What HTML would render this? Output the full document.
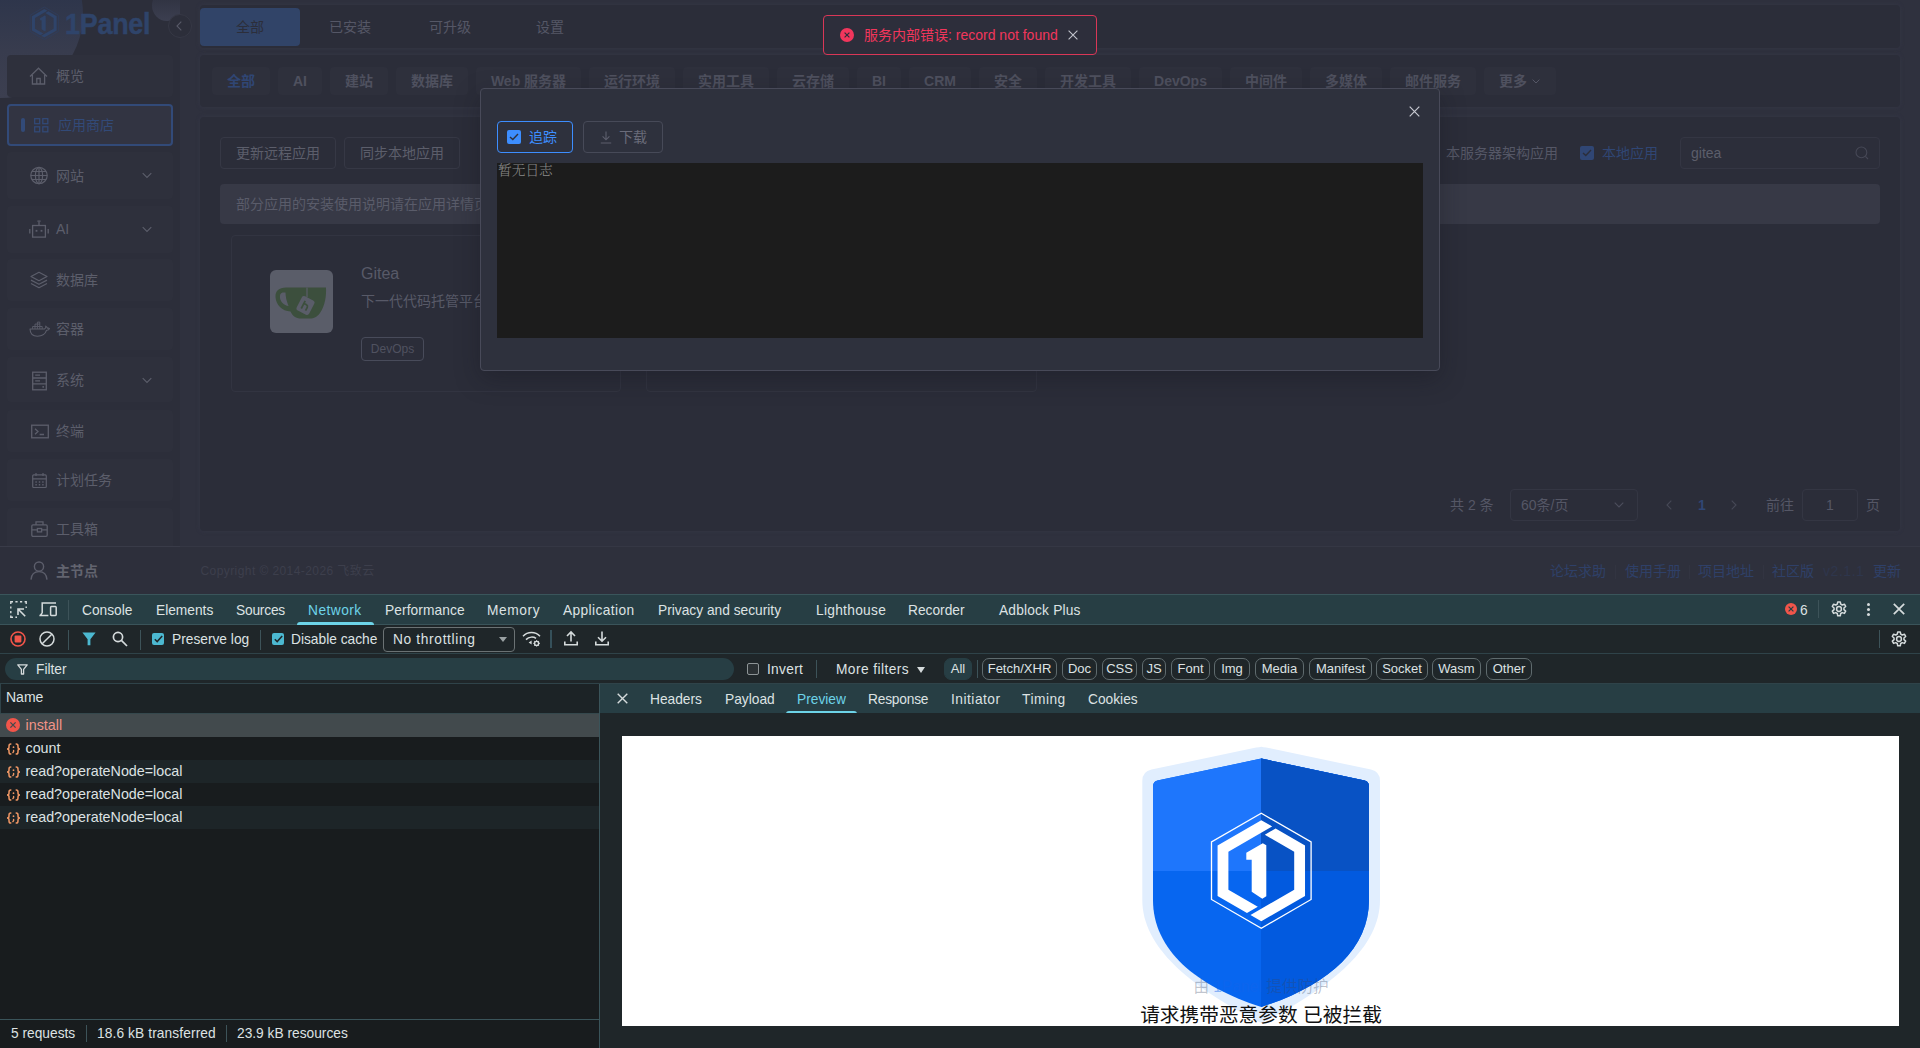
<!DOCTYPE html>
<html lang="zh-CN">
<head>
<meta charset="utf-8">
<title>1Panel</title>
<style>
*{box-sizing:border-box;margin:0;padding:0}
html,body{width:1920px;height:1048px;overflow:hidden;background:#2f313e}
body{position:relative;font-family:"Liberation Sans","Noto Sans CJK SC",sans-serif;font-size:14px;color:#5c5e6b}
.a{position:absolute}
.t{position:absolute;white-space:nowrap;line-height:20px;height:20px}
svg{display:block;overflow:visible}
/* ---------- app (dimmed) ---------- */
#app{position:absolute;left:0;top:0;width:1920px;height:594px;background:#2f313e;overflow:hidden}
#side{position:absolute;left:0;top:0;width:180px;height:594px;background:#2c2e3a;overflow:hidden}
.mi{position:absolute;left:7px;width:166px;background:#2e303c;border-radius:4px}
.mi .t{left:49px;color:#5c5e6b;font-size:14px}
.mi svg{position:absolute;left:22px;transform:translate(1px,.5px)}
.card{position:absolute;background:#2b2d39;border-radius:4px;box-shadow:0 0 4px rgba(60,63,80,.45)}
.cat{position:absolute;top:67px;height:28px;border-radius:4px;background:#2e303c;color:#4f515f;font-weight:bold;font-size:14px;line-height:28px;text-align:center;white-space:nowrap}
.btn{position:absolute;height:32px;border:1px solid #363845;border-radius:4px;line-height:30px;text-align:center;color:#5c5e6b;font-size:14px;white-space:nowrap}
/* ---------- devtools ---------- */
#dt{position:absolute;left:0;top:594px;width:1920px;height:454px;background:#1f2629;font-family:"Liberation Sans","Noto Sans CJK SC",sans-serif;font-size:13.75px;color:#dde2e3}
#dt .t{line-height:18px;height:18px;margin-top:1px}
.chip{position:absolute;top:64px;height:22px;border:1px solid #5f6b6e;border-radius:7px;line-height:20px;text-align:center;font-size:13px;color:#dde2e3;white-space:nowrap}
.sep{position:absolute;width:1px;background:#3d5359}
.row{position:absolute;left:0;width:599px;height:23px}
.row .t{left:25.5px;top:1px;font-size:14.3px}
.jx{position:absolute;left:6px}
</style>
</head>
<body>
<div id="app">
<div id="side">
  <div class="a" style="left:-85px;top:-70px;width:168px;height:168px;border-radius:50%;background:linear-gradient(180deg,#2d354b 38%,#383c4e 72%,#3c3f50 100%)"></div>
  <div class="a" style="left:152px;top:-10px;width:30px;height:31px;border-radius:50%;background:linear-gradient(180deg,#2f3241 20%,#3c3f50 100%)"></div>
  <!-- logo -->
  <svg class="a" style="left:0;top:0" width="90" height="50" viewBox="0 0 90 50">
    <g transform="translate(44.3,23.3) scale(.283)" fill="#2f446a">
      <polygon points="0,-57.5 49.8,-28.75 49.8,28.75 0,57.5 -49.8,28.75 -49.8,-28.75" fill="none" stroke="#2e3d5e" stroke-width="2.6"/>
      <polygon points="0,-50.5 10.83,-44.25 -32.9,-19 -32.9,19 -3.5,35.98 -14.32,42.23 -43.73,25.25 -43.73,-25.25"/>
      <polygon points="0,50.5 -10.83,44.25 32.9,19 32.9,-19 3.5,-35.98 14.32,-42.23 43.73,-25.25 43.73,25.25"/>
      <polygon points="-15,-18 1.5,-27.5 5,-25.5 5,25.5 1,28 -9.6,21 -9.6,-11 -15,-11"/>
    </g>
  </svg>
  <div class="t" style="left:65px;top:6px;height:36px;line-height:36px;font-size:29px;font-weight:bold;color:#2f446a;transform-origin:0 50%;transform:scaleX(.93);letter-spacing:-.3px;-webkit-text-stroke:.5px #2f446a">1Panel</div>

  <div class="mi" style="top:55px;height:42px">
    <svg style="top:12px;transform:none" width="19" height="18" viewBox="0 0 19 18" fill="none" stroke="#5c5e6b" stroke-width="1.3" stroke-linejoin="miter"><path d="M1 9.5 L9.5 1.2 L18 9.5 M3.4 8 V17 H15.6 V8 M7.8 17 V11.5 H11.2 V17"/></svg>
    <div class="t" style="top:11px">概览</div>
  </div>
  <div class="mi" style="top:104px;height:42px;background:#323442;border:2px solid #324a78">
    <div class="a" style="left:12px;top:12px;width:4px;height:14px;border-radius:2px;background:#324a78"></div>
    <svg style="left:25px;top:12px;transform:none" width="14.5" height="14.5" viewBox="0 0 15 15" fill="none" stroke="#324a78" stroke-width="1.3"><rect x=".7" y=".7" width="5.2" height="5.2"/><rect x="9.1" y=".7" width="5.2" height="5.2"/><rect x=".7" y="9.1" width="5.2" height="5.2"/><rect x="9.1" y="9.1" width="5.2" height="5.2"/></svg>
    <div class="t" style="left:49px;top:9px;color:#324a78">应用商店</div>
  </div>
  <div class="mi" style="top:152px;height:47px">
    <svg style="top:14px" width="18" height="18" viewBox="0 0 18 18" fill="none" stroke="#5c5e6b" stroke-width="1.2"><circle cx="9" cy="9" r="8.2"/><ellipse cx="9" cy="9" rx="3.6" ry="8.2"/><path d="M.8 9 H17.2 M2 5 H16 M2 13 H16 M9 .8 V17.2"/></svg>
    <div class="t" style="top:14px">网站</div>
    <svg style="left:134px;top:20px" width="10" height="6" viewBox="0 0 10 6" fill="none" stroke="#5c5e6b" stroke-width="1.1"><path d="M.7 .7 L5 5 L9.3 .7"/></svg>
  </div>
  <div class="mi" style="top:206px;height:47px">
    <svg style="left:21px;top:13px" width="20" height="19" viewBox="0 0 20 19" fill="none" stroke="#5c5e6b" stroke-width="1.3"><rect x="3.6" y="6" width="12.8" height="11.6"/><path d="M10 6 V2.4 M8.4 1.6 H11.6 M.8 9.5 V14 M19.2 9.5 V14"/><rect x="6.6" y="10.4" width="1.8" height="1.8" fill="#5c5e6b" stroke="none"/><rect x="11.6" y="10.4" width="1.8" height="1.8" fill="#5c5e6b" stroke="none"/></svg>
    <div class="t" style="top:13px">AI</div>
    <svg style="left:134px;top:20px" width="10" height="6" viewBox="0 0 10 6" fill="none" stroke="#5c5e6b" stroke-width="1.1"><path d="M.7 .7 L5 5 L9.3 .7"/></svg>
  </div>
  <div class="mi" style="top:259px;height:42px">
    <svg style="top:12px" width="18" height="17" viewBox="0 0 18 17" fill="none" stroke="#5c5e6b" stroke-width="1.2" stroke-linejoin="round"><path d="M9 .8 L17 5 L9 9.2 L1 5 Z M1 8.6 L9 12.8 L17 8.6 M1 12 L9 16.2 L17 12"/></svg>
    <div class="t" style="top:11px">数据库</div>
  </div>
  <div class="mi" style="top:308px;height:42px">
    <svg style="left:21px;top:13px" width="21" height="16" viewBox="0 0 21 16" fill="none" stroke="#5c5e6b" stroke-width="1.1" stroke-linejoin="round"><path d="M1 7.5 H15.5 C16.6 7 17 5.8 16.8 4.6 C17.8 5.2 18.3 6 18.4 6.8 C19.2 6.5 20 6.7 20.4 7.2 C19.8 8.4 18.6 8.8 17.6 8.7 C16.4 12.4 13 14.8 8.4 14.8 C3.8 14.8 1.2 12 1 7.5 Z"/><path d="M3.6 7.4 V5 H6 V7.4 M6 5 H8.4 V7.4 M8.4 5 H10.8 V7.4 M6 5 V2.6 H8.4 V5 M8.4 2.6 H10.8 V5 M10.8 5 H13.2 V7.4 M8.4 2.6 V.6 H10.8 V2.6" stroke-width=".9"/></svg>
    <div class="t" style="top:11px">容器</div>
  </div>
  <div class="mi" style="top:357px;height:45px">
    <svg style="left:24px;top:14px" width="15" height="19" viewBox="0 0 15 19" fill="none" stroke="#5c5e6b" stroke-width="1.3"><rect x=".7" y=".7" width="13.6" height="17.6"/><path d="M.7 6.5 H14.3 M.7 12.4 H14.3 M3.2 3.6 H8 M3.2 9.4 H8"/><rect x="10.4" y="14.6" width="1.6" height="1.6" fill="#5c5e6b" stroke="none"/></svg>
    <div class="t" style="top:13px">系统</div>
    <svg style="left:134px;top:20px" width="10" height="6" viewBox="0 0 10 6" fill="none" stroke="#5c5e6b" stroke-width="1.1"><path d="M.7 .7 L5 5 L9.3 .7"/></svg>
  </div>
  <div class="mi" style="top:410px;height:42px">
    <svg style="left:23px;top:14px" width="18" height="14" viewBox="0 0 18 14" fill="none" stroke="#5c5e6b" stroke-width="1.3"><rect x=".7" y=".7" width="16.6" height="12.6"/><path d="M4 4.2 L7 7 L4 9.8 M8.6 10 H13"/></svg>
    <div class="t" style="top:11px">终端</div>
  </div>
  <div class="mi" style="top:459px;height:42px">
    <svg style="left:24px;top:13px" width="15" height="16" viewBox="0 0 15 16" fill="none" stroke="#5c5e6b" stroke-width="1.2"><rect x=".7" y="2.4" width="13.6" height="12.6" rx="1"/><path d="M.7 6.4 H14.3 M4 .6 V3.6 M11 .6 V3.6"/><path d="M3.4 9.4 h1.4 M6.8 9.4 h1.4 M10.2 9.4 h1.4 M3.4 12.2 h1.4 M6.8 12.2 h1.4 M10.2 12.2 h1.4" stroke-width="1.5"/></svg>
    <div class="t" style="top:11px">计划任务</div>
  </div>
  <div class="mi" style="top:508px;height:42px">
    <svg style="left:23px;top:12px" width="17" height="17" viewBox="0 0 17 17" fill="none" stroke="#5c5e6b" stroke-width="1.3"><rect x=".8" y="4.4" width="15.4" height="11.4" rx="1.2"/><path d="M5 4.4 V1.4 H12 V4.4 M.8 9.4 H6.4 M10.6 9.4 H16.2"/><rect x="6.4" y="8" width="4.2" height="3.4"/></svg>
    <div class="t" style="top:11px">工具箱</div>
  </div>
  <div class="a" style="left:0;top:546px;width:180px;height:48px;background:#2d2f3b;border-top:1px solid #393b48"></div>
  <svg class="a" style="left:30px;top:561px" width="18" height="19" viewBox="0 0 18 19" fill="none" stroke="#5c5e6b" stroke-width="1.4"><circle cx="9" cy="5.6" r="4.6"/><path d="M1 18.6 C1.4 13.4 4.6 10.6 9 10.6 C13.4 10.6 16.6 13.4 17 18.6"/></svg>
  <div class="t" style="left:56px;top:561px;font-weight:bold;color:#62646f">主节点</div>
</div>
<div class="a" style="left:168px;top:14px;width:24px;height:24px;border-radius:50%;background:#2c2e3a;border:1px solid #363845"></div>
<svg class="a" style="left:176px;top:21px" width="6" height="10" viewBox="0 0 6 10" fill="none" stroke="#585a68" stroke-width="1.1"><path d="M5.3 .7 L1 5 L5.3 9.3"/></svg>

<!-- top tab card -->
<div class="card" style="left:200px;top:5px;width:1700px;height:43px"></div>
<div class="a" style="left:200px;top:8px;width:100px;height:38px;border-radius:4px;background:#314468;color:#2c2e3a;text-align:center;line-height:38px;font-size:14px">全部</div>
<div class="t" style="left:300px;top:17px;width:100px;text-align:center;color:#555766">已安装</div>
<div class="t" style="left:400px;top:17px;width:100px;text-align:center;color:#555766">可升级</div>
<div class="t" style="left:500px;top:17px;width:100px;text-align:center;color:#555766">设置</div>
<!-- category card -->
<div class="card" style="left:200px;top:55px;width:1700px;height:52px"></div>
<div class="cat" style="left:212px;width:58px;color:#304674">全部</div>
<div class="cat" style="left:278px;width:44px">AI</div>
<div class="cat" style="left:330px;width:58px">建站</div>
<div class="cat" style="left:396px;width:72px">数据库</div>
<div class="cat" style="left:476px;width:105px">Web 服务器</div>
<div class="cat" style="left:589px;width:86px">运行环境</div>
<div class="cat" style="left:683px;width:86px">实用工具</div>
<div class="cat" style="left:777px;width:72px">云存储</div>
<div class="cat" style="left:857px;width:44px">BI</div>
<div class="cat" style="left:909px;width:62px">CRM</div>
<div class="cat" style="left:979px;width:58px">安全</div>
<div class="cat" style="left:1045px;width:86px">开发工具</div>
<div class="cat" style="left:1139px;width:83px">DevOps</div>
<div class="cat" style="left:1230px;width:72px">中间件</div>
<div class="cat" style="left:1310px;width:72px">多媒体</div>
<div class="cat" style="left:1390px;width:86px">邮件服务</div>
<div class="cat" style="left:1484px;width:72px;text-align:left;padding-left:15px">更多</div>
<svg class="a" style="left:1532px;top:79px" width="8" height="5" viewBox="0 0 8 5" fill="none" stroke="#555766" stroke-width="1"><path d="M.6 .6 L4 4 L7.4 .6"/></svg>
<!-- content card -->
<div class="card" style="left:200px;top:117px;width:1700px;height:414px"></div>
<div class="btn" style="left:220px;top:137px;width:116px">更新远程应用</div>
<div class="btn" style="left:344px;top:137px;width:116px">同步本地应用</div>
<div class="t" style="left:1446px;top:143px;color:#555766">本服务器架构应用</div>
<div class="a" style="left:1580px;top:146px;width:14px;height:14px;border-radius:2px;background:#304674"></div>
<svg class="a" style="left:1582px;top:149px" width="10" height="8" viewBox="0 0 10 8" fill="none" stroke="#2c2e3a" stroke-width="1.4"><path d="M1 4 L3.8 6.6 L9 1"/></svg>
<div class="t" style="left:1602px;top:143px;color:#304674">本地应用</div>
<div class="a" style="left:1680px;top:137px;width:200px;height:32px;border:1px solid #343643;border-radius:4px;background:#2c2e3a"></div>
<div class="t" style="left:1691px;top:143px;color:#5c5e6b">gitea</div>
<svg class="a" style="left:1855px;top:146px" width="14" height="14" viewBox="0 0 14 14" fill="none" stroke="#464856" stroke-width="1.1"><circle cx="6.4" cy="6.4" r="5.4"/><path d="M10.4 10.4 L13 13"/></svg>
<!-- info bar -->
<div class="a" style="left:220px;top:184px;width:1660px;height:40px;border-radius:4px;background:#373946"></div>
<div class="t" style="left:236px;top:194px;color:#5a5c6a">部分应用的安装使用说明请在应用详情页查看，点击应用卡片即可前往。</div>
<!-- app cards -->
<div class="a" style="left:231px;top:234.5px;width:390px;height:157px;border:1px solid #323441;border-radius:4px"></div>
<div class="a" style="left:646px;top:234.5px;width:391px;height:157px;border:1px solid #323441;border-radius:4px"></div>
<div class="a" style="left:270px;top:270px;width:63px;height:63px;border-radius:6px;background:#5a5d69"></div>
<svg class="a" style="left:274px;top:286px" width="55" height="34" viewBox="0 0 55 34">
  <path d="M12 1.5 H52 C52.5 10 51 20 46 27 C43 31 40 32.5 36 32.5 H27 C22 32.5 18.5 30 16.5 25.5 C8 25 2 19 1.5 11 C1.2 5 5 1.5 12 1.5 Z M8.5 6.5 C6.5 7 5.6 9 6 12 C6.6 16 10 19.5 14.5 20 C12.5 15 11.5 10.5 11.5 6.5 Z" fill="#3c4f3d" fill-rule="evenodd"/>
  <path d="M33 1.5 V11" stroke="#5a5d69" stroke-width="1.2" fill="none"/>
  <g transform="translate(31.5,19.5) rotate(27)"><rect x="-7" y="-8" width="14" height="16" rx="2.5" fill="#5a5d69"/><path d="M-2.4 -4 V4.6 M-2.4 -.4 C-1 -1.6 2.4 -1.6 2.4 .8 V4.6" stroke="#3c4f3d" stroke-width="1.7" fill="none"/></g>
</svg>
<div class="t" style="left:361px;top:264px;font-size:16px;color:#585a68">Gitea</div>
<div class="t" style="left:361px;top:291px;color:#585a68">下一代代码托管平台，轻量级自托管 Git 服务</div>
<div class="a" style="left:361px;top:337px;width:63px;height:24px;border:1px solid #484b5a;border-radius:4px;text-align:center;line-height:22px;font-size:12px;color:#505260">DevOps</div>
<!-- pagination -->
<div class="t" style="left:1450px;top:495px;color:#555766">共 2 条</div>
<div class="a" style="left:1510px;top:489px;width:128px;height:32px;border:1px solid #343643;border-radius:4px"></div>
<div class="t" style="left:1521px;top:495px;color:#555766">60条/页</div>
<svg class="a" style="left:1614px;top:502px" width="10" height="6" viewBox="0 0 10 6" fill="none" stroke="#4c4e5c" stroke-width="1.1"><path d="M.7 .7 L5 5 L9.3 .7"/></svg>
<svg class="a" style="left:1666px;top:500px" width="6" height="10" viewBox="0 0 6 10" fill="none" stroke="#464856" stroke-width="1.1"><path d="M5.3 .7 L1 5 L5.3 9.3"/></svg>
<div class="t" style="left:1698px;top:495px;color:#304674;font-weight:bold">1</div>
<svg class="a" style="left:1731px;top:500px" width="6" height="10" viewBox="0 0 6 10" fill="none" stroke="#464856" stroke-width="1.1"><path d="M.7 .7 L5 5 L.7 9.3"/></svg>
<div class="t" style="left:1766px;top:495px;color:#555766">前往</div>
<div class="a" style="left:1802px;top:489px;width:56px;height:32px;border:1px solid #343643;border-radius:4px"></div>
<div class="t" style="left:1802px;top:495px;width:56px;text-align:center;color:#555766">1</div>
<div class="t" style="left:1866px;top:495px;color:#555766">页</div>
<!-- footer -->
<div class="a" style="left:180px;top:546px;width:1740px;height:48px;background:#2e303c;border-top:1px solid #353744"></div>
<div class="t" style="left:200.5px;top:561px;color:#3d3f4c;font-size:12px;letter-spacing:.42px">Copyright © 2014-2026 飞致云</div>
<div class="t" style="left:1550px;top:561px;color:#2f4068">论坛求助</div>
<div class="sep" style="left:1615px;top:565px;height:14px;background:#323441"></div>
<div class="t" style="left:1625px;top:561px;color:#2f4068">使用手册</div>
<div class="sep" style="left:1689px;top:565px;height:14px;background:#323441"></div>
<div class="t" style="left:1698px;top:561px;color:#2f4068">项目地址</div>
<div class="sep" style="left:1763px;top:565px;height:14px;background:#323441"></div>
<div class="t" style="left:1772px;top:561px;color:#2f4068">社区版</div>
<div class="t" style="left:1823px;top:561px;color:#2e364c;letter-spacing:.55px">v2.1.1</div>
<div class="t" style="left:1873px;top:561px;color:#2f4068">更新</div>

<div class="a" style="left:480px;top:88px;width:960px;height:283px;background:#2e313d;border:1px solid #484a59;border-radius:4px;box-shadow:0 8px 24px rgba(20,21,28,.35)"></div>
<svg class="a" style="left:1409px;top:106px" width="11" height="11" viewBox="0 0 11 11" fill="none" stroke="#c8cad2" stroke-width="1.2"><path d="M.7 .7 L10.3 10.3 M10.3 .7 L.7 10.3"/></svg>
<div class="a" style="left:497px;top:121px;width:76px;height:32px;border:1px solid #3d8eff;border-radius:4px"></div>
<div class="a" style="left:507px;top:130px;width:14px;height:14px;border-radius:2px;background:#3d8eff"></div>
<svg class="a" style="left:509px;top:133px" width="10" height="8" viewBox="0 0 10 8" fill="none" stroke="#2e313d" stroke-width="1.4"><path d="M1 4 L3.8 6.6 L9 1"/></svg>
<div class="t" style="left:529px;top:127px;color:#3d8eff">追踪</div>
<div class="a" style="left:583px;top:121px;width:80px;height:32px;border:1px solid #474a58;border-radius:4px"></div>
<svg class="a" style="left:600px;top:131px" width="12" height="13" viewBox="0 0 12 13" fill="none" stroke="#5d5f6d" stroke-width="1.1"><path d="M6 .5 V8.6 M2.6 5.4 L6 8.8 L9.4 5.4 M.8 12 H11.2"/></svg>
<div class="t" style="left:619px;top:127px;color:#6a6c7a">下载</div>
<div class="a" style="left:497px;top:163px;width:926px;height:175px;background:#1c1c1c"></div>
<div class="t" style="left:498px;top:162px;font-family:'Liberation Mono','Noto Serif CJK SC',monospace;font-size:13.7px;font-weight:300;color:#8a8a8a">暂无日志</div>

<div class="a" style="left:823px;top:15px;width:274px;height:40px;border:1px solid #d93757;border-radius:4px;background:#2d2e3b"></div>
<div class="a" style="left:840px;top:28px;width:14px;height:14px;border-radius:50%;background:#f1365c"></div>
<svg class="a" style="left:844px;top:32px" width="6" height="6" viewBox="0 0 6 6" fill="none" stroke="#2d2e3b" stroke-width="1.2"><path d="M.6 .6 L5.4 5.4 M5.4 .6 L.6 5.4"/></svg>
<div class="t" style="left:864px;top:25px;color:#f1365c">服务内部错误: record not found</div>
<svg class="a" style="left:1068px;top:30px" width="10" height="10" viewBox="0 0 10 10" fill="none" stroke="#c2c4cc" stroke-width="1.1"><path d="M.6 .6 L9.4 9.4 M9.4 .6 L.6 9.4"/></svg>

</div>
<div id="dt">
<!-- tab bar -->
<div class="a" style="left:0;top:0;width:1920px;height:31px;background:#273e44;border-top:1px solid #3a555b;border-bottom:1px solid #3a545a"></div>
<svg class="a" style="left:10px;top:7px" width="17" height="17" viewBox="0 0 17 17" fill="none" stroke="#d5dbdc" stroke-width="1.5"><path d="M.8 3 V.8 H3 M5.4 .8 H7.6 M10 .8 H12.2 M14.6 .8 H16.2 V3 M16.2 5.4 V7 M.8 5.4 V7.6 M.8 10 V12.2 M.8 14.6 V16.2 H3 M5.4 16.2 H7" stroke-width="1.4"/><path d="M8 8 L15.2 15.2 M8 14 V8 H14" stroke-width="1.6"/></svg>
<svg class="a" style="left:39px;top:8px" width="19" height="15" viewBox="0 0 19 15" fill="none" stroke="#d5dbdc" stroke-width="1.5"><path d="M3.2 11 V1 H17 M.4 13.4 H9.4 M3.2 11 L1.2 13.4"/><rect x="11.6" y="4.6" width="5.6" height="8.8" rx=".8"/></svg>
<div class="sep" style="left:68px;top:6px;height:20px"></div>
<div class="t" style="left:82px;top:7px">Console</div>
<div class="t" style="left:156px;top:7px">Elements</div>
<div class="t" style="left:236px;top:7px;letter-spacing:-.2px">Sources</div>
<div class="t" style="left:308px;top:7px;color:#6dd3e8;letter-spacing:.47px">Network</div>
<div class="a" style="left:297px;top:27.5px;width:77px;height:3px;background:#6dd3e8;border-radius:3px 3px 0 0"></div>
<div class="t" style="left:385px;top:7px;letter-spacing:.1px">Performance</div>
<div class="t" style="left:487px;top:7px;letter-spacing:.6px">Memory</div>
<div class="t" style="left:563px;top:7px;letter-spacing:.38px">Application</div>
<div class="t" style="left:658px;top:7px">Privacy and security</div>
<div class="t" style="left:816px;top:7px;letter-spacing:.28px">Lighthouse</div>
<div class="t" style="left:908px;top:7px">Recorder</div>
<div class="t" style="left:999px;top:7px;letter-spacing:.18px">Adblock Plus</div>
<div class="a" style="left:1785px;top:9px;width:12px;height:12px;border-radius:50%;background:#f1554a"></div>
<svg class="a" style="left:1788px;top:12px" width="6" height="6" viewBox="0 0 6 6" fill="none" stroke="#273e44" stroke-width="1.2"><path d="M.6 .6 L5.4 5.4 M5.4 .6 L.6 5.4"/></svg>
<div class="t" style="left:1800px;top:7px">6</div>
<div class="sep" style="left:1818px;top:6px;height:18px"></div>
<svg class="a gear" style="left:1830px;top:6px" width="18" height="18" viewBox="0 0 24 24" fill="none" stroke="#d5dbdc" stroke-width="2"><path d="M10.3 2.5 h3.4 l.6 3 l2 1.15 l2.9 -1 l1.7 2.95 l-2.3 2 v2.3 l2.3 2 l-1.7 2.95 l-2.9 -1 l-2 1.15 l-.6 3 h-3.4 l-.6 -3 l-2 -1.15 l-2.9 1 l-1.7 -2.95 l2.3 -2 v-2.3 l-2.3 -2 l1.7 -2.95 l2.9 1 l2 -1.15 z" stroke-linejoin="round"/><circle cx="12" cy="12" r="3.2"/></svg>
<div class="a" style="left:1867px;top:8.5px;width:3px;height:3px;border-radius:50%;background:#d5dbdc;box-shadow:0 5px 0 #d5dbdc,0 10px 0 #d5dbdc"></div>
<svg class="a" style="left:1893px;top:9px" width="12" height="12" viewBox="0 0 12 12" fill="none" stroke="#d5dbdc" stroke-width="1.7"><path d="M.8 .8 L11.2 11.2 M11.2 .8 L.8 11.2"/></svg>

<!-- toolbar -->
<div class="a" style="left:0;top:31px;width:1920px;height:29px;background:#1f2629;border-bottom:1px solid #2f4349"></div>
<svg class="a" style="left:10px;top:37px" width="16" height="16" viewBox="0 0 16 16"><circle cx="8" cy="8" r="7" fill="none" stroke="#f1554a" stroke-width="1.6"/><rect x="4.6" y="4.6" width="6.8" height="6.8" rx=".8" fill="#f1554a"/></svg>
<svg class="a" style="left:39px;top:37px" width="16" height="16" viewBox="0 0 16 16" fill="none" stroke="#d5dbdc" stroke-width="1.5"><circle cx="8" cy="8" r="7"/><path d="M3.2 12.8 L12.8 3.2"/></svg>
<div class="sep" style="left:68px;top:36px;height:20px"></div>
<svg class="a" style="left:82px;top:38px" width="14" height="14" viewBox="0 0 14 14"><path d="M.4 .6 H13.6 L8.4 7.2 V13.2 H5.6 V7.2 Z" fill="#4cb8d0"/></svg>
<svg class="a" style="left:112px;top:37px" width="16" height="16" viewBox="0 0 16 16" fill="none" stroke="#d5dbdc" stroke-width="1.7"><circle cx="6" cy="6" r="4.6"/><path d="M9.4 9.4 L15 15"/></svg>
<div class="sep" style="left:140px;top:36px;height:20px"></div>
<div class="a" style="left:152px;top:39px;width:12px;height:12px;border-radius:2px;background:#4cb8d0"></div>
<svg class="a" style="left:154px;top:41px" width="9" height="8" viewBox="0 0 9 8" fill="none" stroke="#1f2629" stroke-width="1.5"><path d="M.8 4.2 L3.2 6.6 L8.2 1"/></svg>
<div class="t" style="left:172px;top:36px">Preserve log</div>
<div class="sep" style="left:260px;top:36px;height:20px"></div>
<div class="a" style="left:272px;top:39px;width:12px;height:12px;border-radius:2px;background:#4cb8d0"></div>
<svg class="a" style="left:274px;top:41px" width="9" height="8" viewBox="0 0 9 8" fill="none" stroke="#1f2629" stroke-width="1.5"><path d="M.8 4.2 L3.2 6.6 L8.2 1"/></svg>
<div class="t" style="left:291px;top:36px">Disable cache</div>
<div class="a" style="left:383px;top:33px;width:132px;height:25px;border:1px solid #6b7274;border-radius:4px"></div>
<div class="t" style="left:393px;top:36px;letter-spacing:.65px">No throttling</div>
<div class="a" style="left:499px;top:43px;width:0;height:0;border-left:4px solid transparent;border-right:4px solid transparent;border-top:5px solid #9aa1a3"></div>
<svg class="a" style="left:522px;top:36px" width="20" height="18" viewBox="0 0 20 18" fill="none" stroke="#d5dbdc" stroke-width="1.5"><path d="M1 6.2 C5.6 1.4 13.4 1.4 18 6.2 M4 9.6 C7 6.6 11.4 6.4 14 8.4"/><path d="M6.6 12.6 L9.6 10.4 V14.6 Z" fill="#d5dbdc" stroke="none"/><circle cx="14.6" cy="13.4" r="2" stroke-width="1.4"/><path d="M14.6 10.2 V11 M14.6 15.8 V16.6 M11.4 13.4 H12.2 M17 13.4 H17.8 M12.4 11.2 L13 11.8 M16.2 15 L16.8 15.6 M12.4 15.6 L13 15 M16.2 11.8 L16.8 11.2" stroke-width="1.2"/></svg>
<div class="sep" style="left:550px;top:36px;height:18px;width:2px;background:#35505a"></div>
<svg class="a" style="left:564px;top:37px" width="14" height="15" viewBox="0 0 14 15" fill="none" stroke="#d5dbdc" stroke-width="1.6"><path d="M7 10.6 V1.2 M3 5 L7 1 L11 5 M.8 10.6 V13.8 H13.2 V10.6"/></svg>
<svg class="a" style="left:595px;top:37px" width="14" height="15" viewBox="0 0 14 15" fill="none" stroke="#d5dbdc" stroke-width="1.6"><path d="M7 .6 V10 M3 6.2 L7 10.2 L11 6.2 M.8 10.6 V13.8 H13.2 V10.6"/></svg>
<div class="sep" style="left:1879px;top:36px;height:18px"></div>
<svg class="a gear" style="left:1890px;top:36px" width="18" height="18" viewBox="0 0 24 24" fill="none" stroke="#d5dbdc" stroke-width="2"><path d="M10.3 2.5 h3.4 l.6 3 l2 1.15 l2.9 -1 l1.7 2.95 l-2.3 2 v2.3 l2.3 2 l-1.7 2.95 l-2.9 -1 l-2 1.15 l-.6 3 h-3.4 l-.6 -3 l-2 -1.15 l-2.9 1 l-1.7 -2.95 l2.3 -2 v-2.3 l-2.3 -2 l1.7 -2.95 l2.9 1 l2 -1.15 z" stroke-linejoin="round"/><circle cx="12" cy="12" r="3.2"/></svg>

<!-- filter bar -->
<div class="a" style="left:0;top:60px;width:1920px;height:30px;background:#1f2629;border-bottom:1px solid #2f4349"></div>
<div class="a" style="left:5px;top:64px;width:729px;height:22px;border-radius:11px;background:#273e44"></div>
<svg class="a" style="left:17px;top:70px" width="11" height="11" viewBox="0 0 11 11" fill="none" stroke="#d5dbdc" stroke-width="1.3"><path d="M.8 .8 H10.2 L6.6 5.4 V10 H4.4 V5.4 Z" stroke-linejoin="round"/></svg>
<div class="t" style="left:36px;top:66px">Filter</div>
<div class="a" style="left:747px;top:69px;width:12px;height:12px;border:1px solid #8d9496;border-radius:2px;background:#2a3033"></div>
<div class="t" style="left:767px;top:66px;letter-spacing:.3px">Invert</div>
<div class="sep" style="left:816px;top:66px;height:18px"></div>
<div class="t" style="left:836px;top:66px;letter-spacing:.42px">More filters</div>
<div class="a" style="left:917px;top:73px;width:0;height:0;border-left:4.5px solid transparent;border-right:4.5px solid transparent;border-top:6px solid #d5dbdc"></div>
<div class="chip" style="left:944px;width:28px;border-color:#273e44;background:#273e44">All</div>
<div class="sep" style="left:977px;top:66px;height:18px"></div>
<div class="chip" style="left:982px;width:75px">Fetch/XHR</div>
<div class="chip" style="left:1062px;width:35px">Doc</div>
<div class="chip" style="left:1102px;width:35px">CSS</div>
<div class="chip" style="left:1142px;width:24px">JS</div>
<div class="chip" style="left:1171px;width:39px">Font</div>
<div class="chip" style="left:1214px;width:36px">Img</div>
<div class="chip" style="left:1255px;width:49px">Media</div>
<div class="chip" style="left:1309px;width:63px">Manifest</div>
<div class="chip" style="left:1376px;width:52px">Socket</div>
<div class="chip" style="left:1432px;width:49px">Wasm</div>
<div class="chip" style="left:1486px;width:46px">Other</div>

<!-- left panel -->
<div class="a" style="left:0;top:90px;width:599px;height:364px;background:#181c1e"></div>
<div class="a" style="left:0;top:90px;width:599px;height:29px;background:#1c2326;border-left:1px solid #2f4349"></div><div class="a" style="left:0;top:118.5px;width:599px;height:1px;background:#35484d"></div>
<div class="t" style="left:6px;top:93px;font-size:14px">Name</div>
<div class="row" style="top:119.5px;background:#424a4d;height:23.5px"><!-- selected --><div class="t" style="color:#f29488">install</div></div>
<div class="row" style="top:143px;background:#181c1e;height:23px"><div class="t">count</div></div>
<div class="row" style="top:166px;background:#1d2528"><div class="t">read?operateNode=local</div></div>
<div class="row" style="top:189px;background:#181c1e"><div class="t">read?operateNode=local</div></div>
<div class="row" style="top:212px;background:#1d2528"><div class="t">read?operateNode=local</div></div>
<div class="a" style="left:6px;top:124px;width:14px;height:14px;border-radius:50%;background:#f1554a"></div>
<svg class="a" style="left:10px;top:128px" width="6" height="6" viewBox="0 0 6 6" fill="none" stroke="#424a4d" stroke-width="1.3"><path d="M.4 .4 L5.6 5.6 M5.6 .4 L.4 5.6"/></svg>
<svg class="jx" style="top:149px" width="15" height="12" viewBox="0 0 15 12" fill="none" stroke="#ee9664" stroke-width="1.5" stroke-linecap="round"><path d="M4.8 .9 C3.2 .9 3 1.8 3 3 V4.2 C3 5.3 2.4 6 1 6 C2.4 6 3 6.7 3 7.8 V9 C3 10.2 3.2 11.1 4.8 11.1 M10.2 .9 C11.8 .9 12 1.8 12 3 V4.2 C12 5.3 12.6 6 14 6 C12.6 6 12 6.7 12 7.8 V9 C12 10.2 11.8 11.1 10.2 11.1"/><circle cx="7.5" cy="4.2" r=".9" fill="#ee9664" stroke="none"/><path d="M7.6 7.4 V8.6 L6.9 9.6" stroke-width="1.4"/></svg>
<svg class="jx" style="top:172px" width="15" height="12" viewBox="0 0 15 12" fill="none" stroke="#ee9664" stroke-width="1.5" stroke-linecap="round"><path d="M4.8 .9 C3.2 .9 3 1.8 3 3 V4.2 C3 5.3 2.4 6 1 6 C2.4 6 3 6.7 3 7.8 V9 C3 10.2 3.2 11.1 4.8 11.1 M10.2 .9 C11.8 .9 12 1.8 12 3 V4.2 C12 5.3 12.6 6 14 6 C12.6 6 12 6.7 12 7.8 V9 C12 10.2 11.8 11.1 10.2 11.1"/><circle cx="7.5" cy="4.2" r=".9" fill="#ee9664" stroke="none"/><path d="M7.6 7.4 V8.6 L6.9 9.6" stroke-width="1.4"/></svg>
<svg class="jx" style="top:195px" width="15" height="12" viewBox="0 0 15 12" fill="none" stroke="#ee9664" stroke-width="1.5" stroke-linecap="round"><path d="M4.8 .9 C3.2 .9 3 1.8 3 3 V4.2 C3 5.3 2.4 6 1 6 C2.4 6 3 6.7 3 7.8 V9 C3 10.2 3.2 11.1 4.8 11.1 M10.2 .9 C11.8 .9 12 1.8 12 3 V4.2 C12 5.3 12.6 6 14 6 C12.6 6 12 6.7 12 7.8 V9 C12 10.2 11.8 11.1 10.2 11.1"/><circle cx="7.5" cy="4.2" r=".9" fill="#ee9664" stroke="none"/><path d="M7.6 7.4 V8.6 L6.9 9.6" stroke-width="1.4"/></svg>
<svg class="jx" style="top:218px" width="15" height="12" viewBox="0 0 15 12" fill="none" stroke="#ee9664" stroke-width="1.5" stroke-linecap="round"><path d="M4.8 .9 C3.2 .9 3 1.8 3 3 V4.2 C3 5.3 2.4 6 1 6 C2.4 6 3 6.7 3 7.8 V9 C3 10.2 3.2 11.1 4.8 11.1 M10.2 .9 C11.8 .9 12 1.8 12 3 V4.2 C12 5.3 12.6 6 14 6 C12.6 6 12 6.7 12 7.8 V9 C12 10.2 11.8 11.1 10.2 11.1"/><circle cx="7.5" cy="4.2" r=".9" fill="#ee9664" stroke="none"/><path d="M7.6 7.4 V8.6 L6.9 9.6" stroke-width="1.4"/></svg>
<div class="a" style="left:0;top:425px;width:599px;height:29px;background:#181c1e;border-top:1px solid #3a545a"></div>
<div class="t" style="left:11px;top:430px">5 requests</div>
<div class="sep" style="left:86px;top:431px;height:17px"></div>
<div class="t" style="left:97px;top:430px;letter-spacing:.1px">18.6 kB transferred</div>
<div class="sep" style="left:226px;top:431px;height:17px"></div>
<div class="t" style="left:237px;top:430px">23.9 kB resources</div>
<div class="a" style="left:599px;top:90px;width:1px;height:364px;background:#3a545a"></div>

<!-- right panel -->
<div class="a" style="left:600px;top:90px;width:1320px;height:29px;background:#273e44"></div><div class="a" style="left:600px;top:118.5px;width:1320px;height:1px;background:#3a545a"></div>
<svg class="a" style="left:617px;top:99px" width="11" height="11" viewBox="0 0 11 11" fill="none" stroke="#d5dbdc" stroke-width="1.4"><path d="M.7 .7 L10.3 10.3 M10.3 .7 L.7 10.3"/></svg>
<div class="t" style="left:650px;top:96px">Headers</div>
<div class="t" style="left:725px;top:96px">Payload</div>
<div class="t" style="left:797px;top:96px;color:#6dd3e8">Preview</div>
<div class="a" style="left:786px;top:116.5px;width:71px;height:3.5px;background:#6dd3e8;border-radius:3px 3px 0 0"></div>
<div class="t" style="left:868px;top:96px;letter-spacing:-.2px">Response</div>
<div class="t" style="left:951px;top:96px;letter-spacing:.5px">Initiator</div>
<div class="t" style="left:1022px;top:96px;letter-spacing:.5px">Timing</div>
<div class="t" style="left:1088px;top:96px">Cookies</div>
<div class="a" style="left:600px;top:119px;width:1320px;height:335px;background:#1f2629"></div>
<div class="a" id="pv" style="left:622px;top:142px;width:1277px;height:290px;background:#fff;overflow:hidden">
<svg class="a" style="left:-622px;top:-736px" width="1920" height="1048" viewBox="0 0 1920 1048">
  <defs><clipPath id="sh"><path d="M1261.3 758.6 L1364.6 780.4 Q1369 781.4 1369 786.5 L1369 900 C1369 950 1326.6 986 1261.3 1007 C1196 986 1153 950 1153 900 L1153 786.5 Q1153 781.4 1157.4 780.4 Z"/></clipPath></defs>
  <path d="M1261.3 746.7 Q1261.3 746.7 1270 748.2 L1371 769.6 Q1380 771.6 1380 781 L1380 900 C1380 950 1326 990 1261.3 1023 C1196 990 1142.3 950 1142.3 900 L1142.3 781 Q1142.3 771.6 1151.5 769.6 L1252.6 748.2 Q1261.3 746.7 1261.3 746.7 Z" fill="#e1eefe"/>
  <g clip-path="url(#sh)">
    <rect x="1150" y="750" width="222" height="262" fill="#0766f0"/>
    <rect x="1150" y="750" width="222" height="121" fill="#1e76fc"/>
    <rect x="1261" y="750" width="111" height="262" fill="#025adf"/>
    <rect x="1261" y="750" width="111" height="121" fill="#0852c4"/>
  </g>
  <g transform="translate(1261.3,870.7)">
    <polygon points="0,-57.5 49.8,-28.75 49.8,28.75 0,57.5 -49.8,28.75 -49.8,-28.75" fill="none" stroke="#fff" stroke-width="1.3"/>
    <polygon points="0,-50.5 10.83,-44.25 -32.9,-19 -32.9,19 -3.5,35.98 -14.32,42.23 -43.73,25.25 -43.73,-25.25" fill="#fff"/>
    <polygon points="0,50.5 -10.83,44.25 32.9,19 32.9,-19 3.5,-35.98 14.32,-42.23 43.73,-25.25 43.73,25.25" fill="#fff"/>
    <polygon points="-15,-18 1.5,-27.5 5,-25.5 5,25.5 1,28 -9.6,21 -9.6,-11 -15,-11" fill="#fff"/>
  </g>
</svg>
<div class="t" style="left:439px;top:239px;width:400px;height:22px;line-height:22px;text-align:center;font-size:15.6px;color:rgba(55,70,100,.32)">由 <span style="color:rgba(20,100,235,.45)">1Panel</span> 提供防护</div>
<div class="t" style="left:439px;top:264px;width:400px;height:28px;line-height:28px;text-align:center;font-size:19.7px;color:#111">请求携带恶意参数 已被拦截</div>

</div>

</div>
</body>
</html>
